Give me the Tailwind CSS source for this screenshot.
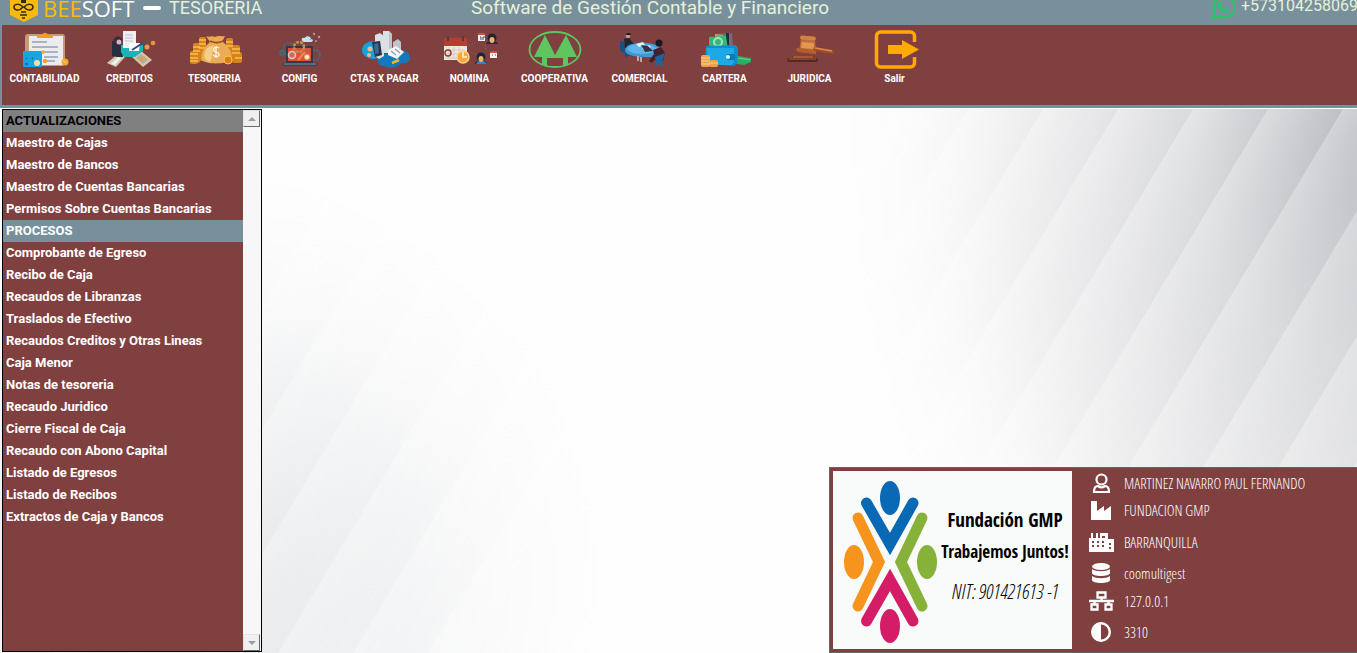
<!DOCTYPE html>
<html lang="es">
<head>
<meta charset="utf-8">
<meta name="viewport" content="width=device-width, initial-scale=1">
<title>BEESOFT - Tesoreria</title>
<script src="https://cdn.jsdelivr.net/npm/@tailwindcss/browser@4"></script>
</head>
<body class="flex h-screen flex-col overflow-hidden bg-white font-['Roboto','Liberation_Sans',sans-serif]">

<header class="flex h-[25px] shrink-0 items-start justify-between overflow-hidden bg-[#78909c] pl-2 text-[#e6f2d8]">
  <div class="flex w-[463px] shrink-0 items-start">
    <svg class="h-[23px] w-8" viewBox="0 0 32 23" aria-hidden="true">
      <path d="M2-3 16-9 30-3V15L16 22 2 15Z" fill="#fbb90c"/>
      <g fill="none" stroke="#33290d" stroke-width="1.500"><path d="M15 7C11 3 6 4 6 7s5 5 9 0Zm1 0c4-4 9-3 9 0s-5 5-9 0Z"/><path d="M13 12h5M12 15h7M14 18h3"/></g>
      <path d="M13-1h5v4h-5z" fill="#33290d"/>
    </svg>
    <p class="ml-[3px] w-[93px] font-['Open_Sans',sans-serif] text-[22px] leading-4 text-white"><span class="text-[#fbb90c]">BEE</span>SOFT</p>
    <span class="mt-1.5 ml-[7px] h-1 w-[18px] rounded-full bg-white"></span>
    <h1 class="ml-2 text-lg leading-4">TESORERIA</h1>
  </div>
  <p class="flex-1 text-[19px] leading-4 whitespace-nowrap">Software de Gestión Contable y Financiero</p>
  <a href="https://wa.me/573104258069" class="flex w-[146px] shrink-0 items-start gap-1.5 overflow-hidden text-base leading-3 whitespace-nowrap">
    <svg class="h-5 w-6 shrink-0" viewBox="0 0 24 20" aria-hidden="true"><path d="M2 18 4 12A10.500 10.500 0 1 1 9 16.500Z" fill="none" stroke="#25c765" stroke-width="2.200"/><path d="M8 1c2-1 3 3 2 5 1 2 2 3 4 3 1-1 4-1 3 2-2 3-6 1-8-1S5 4 8 1Z" fill="#25c765"/></svg>
    +573104258069
  </a>
</header>

<nav aria-label="Módulos" class="mb-px flex h-[83px] shrink-0 border-b-[3px] border-l-2 border-[#78909c] bg-[#804040] text-[10px] leading-3 font-bold text-white">
  <button class="flex w-[85px] flex-col items-center gap-[3px] pt-[5px]">
    <svg class="h-10 w-14" viewBox="0 0 56 40" aria-hidden="true"><rect x="8" y="4" width="40" height="32" rx="3" fill="#c79a72"/><path d="M12 6h34v29H12z" fill="#ececee"/><path d="M20 8V5h5c1-3 5-3 6 0h5v3Z" fill="#f59a23"/><path d="M15 12h15M15 17h26M19 22h22M27 27h14M27 31h11" stroke="#92a0b9" stroke-width="1.500"/><rect x="6" y="21" width="19" height="16" rx="1" fill="#17a4df"/><path d="m9 28 1 1m5-1 1 1m-8 5h3" stroke="#116493" stroke-width="1.500"/><circle cx="20" cy="33" r="3" fill="#ffe2a0"/><g fill="#f5a623"><circle cx="26" cy="22" r="1.800"/><circle cx="28" cy="31" r="2.200"/><circle cx="48" cy="32" r="3.500"/></g><path d="m46 31 4 2" stroke="#ffd66e"/></svg>
    CONTABILIDAD
  </button>
  <button class="flex w-[85px] flex-col items-center gap-[3px] pt-[5px]">
    <svg class="h-10 w-14" viewBox="0 0 56 40" aria-hidden="true"><path d="m5 33 12-10 6 4-9 10Z" fill="#cfccbd"/><path d="m9 34 7-7 3 1-6 7Z" fill="#f6f4df"/><path d="m30 27 9-6 11 9-9 7Z" fill="#d9c5a2"/><path d="m34 28 5-4 7 6-5 4Z" fill="#a9b0a8"/><path d="m37 29 5-3 2 2-5 3Z" fill="#ee9b41"/><path d="M10 11h8l3 16h-6l-5-1Z" fill="#27303e"/><circle cx="16" cy="11" r="4.500" fill="#3b2a3b"/><circle cx="17" cy="12" r="2.500" fill="#d7b5bd"/><path d="M19 15h22v6l-8 6H22l-3-5Z" fill="#1bb2b8"/><path d="M21 1h13v17H21z" fill="#f0f0f2"/><path d="M23 5h8m-8 3h8m-8 3h8" stroke="#bac5cc"/><path d="M27 13h11l-1 8H27Z" fill="#f7f9fb"/><path d="M30 20 47 9" stroke="#185a83" stroke-width="2"/><path d="m40 11 8-3 1 4-7 4Z" fill="#70493f"/><circle cx="45" cy="17" r="2.500" fill="#e79a4c"/><circle cx="51" cy="13" r="2.300" fill="#e9913f"/></svg>
    CREDITOS
  </button>
  <button class="flex w-[85px] flex-col items-center gap-[3px] pt-[5px]">
    <svg class="h-10 w-14" viewBox="0 0 56 40" aria-hidden="true"><g fill="#d7821a"><rect x="3" y="21" width="8" height="13" rx="2"/><rect x="6" y="13" width="7" height="20" rx="2"/><rect x="12" y="7" width="7" height="24" rx="2"/><rect x="39" y="8" width="7" height="24" rx="2"/><rect x="45" y="15" width="8" height="18" rx="2"/><rect x="48" y="22" width="7" height="11" rx="2"/></g><path d="M3 24h8m-8 4h8m-8 3h8M6 17h7m-7 4h7m-1-11h7m-7 4h7m-7 4h7m20-6h7m-7 4h7m-1 3h8m-8 4h8m-5 5h7" stroke="#f8c153" stroke-width="1.300"/><path d="M23 12h13c7 6 10 12 8 18-2 4-26 5-29 0-2-6 2-13 8-18Z" fill="#eaac54"/><path d="m23 12-4-6c4 2 5-1 9 1 4-2 6 0 10-1l-3 6Z" fill="#ecaa50"/><path d="M23 11c4 2 9 2 13 0" fill="none" stroke="#9b4e1e" stroke-width="1.500"/><path d="M20 18c-5 8-3 12 3 14 4-8 1-12 4-17Z" fill="#f5cf89"/><path d="M32 18c-3-2-7 0-5 3 1 1 4 1 5 3s-3 4-6 1m3-9v12" fill="none" stroke="#fff8e6" stroke-width="1.300"/><circle cx="41" cy="30" r="4" fill="#d68119" stroke="#ffc44c"/></svg>
    TESORERIA
  </button>
  <button class="flex w-[85px] flex-col items-center gap-[3px] pt-[5px]">
    <svg class="h-10 w-14" viewBox="0 0 56 40" aria-hidden="true"><g fill="none" stroke="#426978" stroke-width="2"><circle cx="17" cy="19" r="6" stroke-dasharray="3 1"/><circle cx="43" cy="25" r="5" stroke-dasharray="3 1"/><circle cx="10" cy="23" r="2"/></g><path d="M14 16h27v17H14z" fill="#303a4a"/><path d="M16 18h23v13H16z" fill="#dc5238"/><circle cx="27" cy="17" r="5" fill="none" stroke="#b9954f" stroke-width="2.500" stroke-dasharray="3 1"/><circle cx="20" cy="25" r="3.500" fill="#da6551" stroke="#d7cfcb" stroke-width="1.500"/><circle cx="35" cy="27" r="2.500" fill="#fff0dc" stroke="#f5a456"/><path d="m26 30 7-8" stroke="#ef874f" stroke-width="2"/><path d="M10 33h36l-2 3H12Z" fill="#374756"/><path d="M12 34h32" stroke="#7890a4"/><path d="M30 11c-1-3 1-4 3-3 1-3 6-2 6 1 3 0 2 3 0 3h-7Z" fill="#c3e4fa"/><g fill="#b0a0b0"><circle cx="42" cy="4" r="1.200"/><circle cx="47" cy="7" r="1.200"/><circle cx="44" cy="11" r="1"/></g><path d="m38 10 4-6m-1 12 6-9" stroke="#806b77" stroke-dasharray="1 2"/></svg>
    CONFIG
  </button>
  <button class="flex w-[85px] flex-col items-center gap-[3px] pt-[5px]">
    <svg class="h-10 w-14" viewBox="0 0 56 40" aria-hidden="true"><ellipse cx="16" cy="20" rx="11" ry="9" fill="#17a0dd"/><path d="M21 28c4-6 9-2 14-6 6-4 19-1 17 4 3 3-1 8-7 7-4 5-14 6-18 3-5 0-8-4-6-8Z" fill="#1478bd"/><path d="m18 5 5-2 4 3v20l-5 3-4-3Zm8-4h6l3 3v19h-9Z" fill="#dcdfe4"/><path d="m32 2 3 2v18l-3 2Zm4 10 5-3 3 3v8l-8 3Z" fill="#bec4cc"/><path d="m15 12 8-1 2 14-7 2Z" fill="#273449"/><path d="m17 14 4-1 1 10-4 1Z" fill="#426991"/><path d="m31 20 8-4 8 6-7 7-9-4Z" fill="#f4f7f9"/><path d="m34 21 5 4m-1-6 5 4" stroke="#8fa0b1" stroke-width="1.500"/><g fill="#f4bb83"><circle cx="13" cy="19" r="2.500"/><circle cx="12" cy="25" r="2"/></g><path d="m35 33 7-3" stroke="#f6b42e" stroke-width="2.500"/></svg>
    CTAS X PAGAR
  </button>
  <button class="flex w-[85px] flex-col items-center gap-[3px] pt-[5px]">
    <svg class="h-10 w-14" viewBox="0 0 56 40" aria-hidden="true"><path d="M2 13h23v17H2z" fill="#f0e8dd"/><path d="M2 8h23v8H2z" fill="#b83c30"/><path d="M6 6v5m15-5v5" stroke="#5b3836" stroke-width="2"/><path d="M3 20h20M3 24h20M3 28h20M7 17v12m5-12v12m5-12v12" stroke="#d3ccc6"/><circle cx="6" cy="23" r="3" fill="none" stroke="#943d35" stroke-width="1.500"/><circle cx="21" cy="27" r="6" fill="#f6a83c" stroke="#ffd185" stroke-width="1.500"/><path d="M21 22v5h4" fill="none" stroke="#fff4d8" stroke-width="1.500"/><path d="M36 4h7v7h-7zM48 22h7v6h-7z" fill="#f5efef"/><path d="M36 3h7v2h-7zM48 21h7v2h-7z" fill="#d74849"/><path d="M38 7h1v3m4-3h-2v3m9 15h1m2 0h1" fill="none" stroke="#514c55"/><path d="M44 14c0-4 12-4 12 0ZM33 34c0-5 12-5 12 0Z" fill="#242d43"/><path d="m34 34 3-4h4l4 4Z" fill="#2f87cd"/><circle cx="50" cy="8" r="4.500" fill="#20242c"/><circle cx="39" cy="27" r="4.500" fill="#20242c"/><ellipse cx="50" cy="10" rx="2.500" ry="3" fill="#f1b26b"/><ellipse cx="39" cy="29" rx="2.500" ry="3" fill="#f1b26b"/><path d="m27 16 7-4m-5 10 6 3m8-10 1 6" stroke="#7e727d" stroke-dasharray="1 2"/></svg>
    NOMINA
  </button>
  <button class="flex w-[85px] flex-col items-center gap-[3px] pt-[5px]">
    <svg class="h-10 w-14" viewBox="0 0 56 40" aria-hidden="true"><ellipse cx="28" cy="19.500" rx="25.500" ry="17.500" fill="none" stroke="#5fc65f" stroke-width="1.800"/><g fill="#5fc65f"><path d="M18 5 29 27H20v9l-5-2v-7H7ZM39 5l11 22h-9v7l-5 2v-9h-9Z"/><path d="M18 27h20v1H18z"/></g></svg>
    COOPERATIVA
  </button>
  <button class="flex w-[85px] flex-col items-center gap-[3px] pt-[5px]">
    <svg class="h-10 w-14" viewBox="0 0 56 40" aria-hidden="true"><path d="m8 11 4 1 2 9 7 2v4l-4-2-4 3v-5l-5-2Z" fill="#17517e"/><path d="m12 9 5-2 3 5 6 3-1 4-12-1Z" fill="#202734"/><circle cx="16" cy="6" r="2.300" fill="#c5998a"/><path d="M14 5c0-2 4-3 5 0Z" fill="#17191d"/><path d="M13 20c0-7 17-9 28-6 13 4 9 13-4 13-12 0-24-1-24-7Z" fill="#4099d7"/><path d="M15 19c2-6 22-7 31 0-1 5-26 8-31 0Z" fill="#60b4e9"/><path d="M26 26v5m3-4v5" stroke="#c6ccd2" stroke-width="1.500"/><path d="m24 14 7-2 2 3-6 2Zm6 4 7-3 2 2-6 4Z" fill="#e9eff5"/><path d="m29 15 7 1 5 5-8 1Z" fill="#353542"/><circle cx="47" cy="13" r="3.500" fill="#17191e"/><path d="m41 20 8-3 4 6-2 8-7-2-5 4-2-2 5-7Z" fill="#471f2a"/><path d="m43 27 10-4-3 9 1 5-4-3-4 2 1-5Z" fill="#1c65a2"/></svg>
    COMERCIAL
  </button>
  <button class="flex w-[85px] flex-col items-center gap-[3px] pt-[5px]">
    <svg class="h-10 w-14" viewBox="0 0 56 40" aria-hidden="true"><path d="m18 4 17-1 1 14H19Z" fill="#6c7179"/><path d="M29 3h3v14h-3z" fill="#262c36"/><path d="m18 4 8 1v12h-8Z" fill="#bf9a5c"/><circle cx="36" cy="19" r="4" fill="#ed9b43"/><path d="m12 7 17-1 2 13H12Z" fill="#32b978"/><circle cx="21" cy="12" r="4" fill="none" stroke="#a6e1c0" stroke-width="2"/><path d="m9 16 29-1 3 3v15l-4 3-24-2-5-5Z" fill="#118dcb"/><path d="M9 18h28v14l-3 3H13Z" fill="#1ca9e6"/><path d="M30 24h8v6h-8Z" fill="#087bb9"/><circle cx="31" cy="27" r="2" fill="#e5f8ff"/><g fill="#efa24b"><rect x="4" y="25" width="9" height="12" rx="2"/><rect x="12" y="30" width="9" height="7" rx="2"/></g><path d="M4 28h9m-9 3h9m-9 3h9m-1-1h9" stroke="#ffd288"/><path d="m41 26 13 2v4l-7 3-7-1Z" fill="#28ad64"/><path d="m41 28 12 2" stroke="#71d294"/></svg>
    CARTERA
  </button>
  <button class="flex w-[85px] flex-col items-center gap-[3px] pt-[5px]">
    <svg class="h-10 w-14" viewBox="0 0 56 40" aria-hidden="true"><path d="m19 8 14 1 1 15-17-2Z" fill="#bd6d39"/><path d="m20 12 12 1v6l-13-1Z" fill="#e69653"/><path d="M32 17 51 20c3 1 2 4-1 4l-19-3Z" fill="#9c4c27"/><path d="m33 18 17 3" stroke="#df8b4b" stroke-width="1.500"/><rect x="18" y="6" width="16" height="4" rx="2" fill="#d28149" transform="rotate(5 26 8)"/><rect x="14" y="19" width="20" height="4" rx="2" fill="#b35d2e" transform="rotate(8 24 21)"/><path d="M10 26h22v4H10z" fill="#7c3521"/><path d="M11 27h20" stroke="#d37b49"/><rect x="5" y="28" width="31" height="4" rx="2" fill="#572820"/><path d="M7 29h27" stroke="#a76046"/></svg>
    JURIDICA
  </button>
  <button class="flex w-[85px] flex-col items-center gap-[3px] pt-[5px]">
    <svg class="h-10 w-14" viewBox="0 0 56 40" aria-hidden="true"><path d="M47.500 12V6a4 4 0 0 0-4-4H13.500a4 4 0 0 0-4 4v27a4 4 0 0 0 4 4h30a4 4 0 0 0 4-4v-6" fill="none" stroke="#ffaa00" stroke-width="3.500"/><path d="M21 15h14v-5l17 9.500L35 29v-5H21Z" fill="#ffaa00"/></svg>
    Salir
  </button>
</nav>

<main class="relative flex min-h-0 flex-1 items-stretch justify-between">
  <!-- Decorative feathered backdrop -->
  <svg class="absolute inset-0 h-full w-full" viewBox="0 0 1357 544" preserveAspectRatio="none" aria-hidden="true">
    <defs>
      <radialGradient id="tr" gradientUnits="userSpaceOnUse" cx="1357" cy="20" r="540" gradientTransform="translate(0 -8) scale(1 1.400)"><stop offset="0" stop-color="#bcbdc2"/><stop offset=".3" stop-color="#d9dadc"/><stop offset=".65" stop-color="#f0f0f1"/><stop offset="1" stop-color="#fefefe" stop-opacity="0"/></radialGradient>
      <radialGradient id="bl" gradientUnits="userSpaceOnUse" cx="180" cy="470" r="460"><stop offset="0" stop-color="#e4e5e7"/><stop offset=".5" stop-color="#f2f3f4"/><stop offset="1" stop-color="#fefefe" stop-opacity="0"/></radialGradient>
      <linearGradient id="f" gradientUnits="userSpaceOnUse" x1="0" y1="0" x2="55" y2="33"><stop offset="0" stop-color="#fff" stop-opacity=".3"/><stop offset=".6" stop-color="#fff" stop-opacity=".1"/><stop offset="1" stop-color="#fff" stop-opacity="0"/></linearGradient>
      <path id="b" d="M0 0-326 544H-251L75 0Z" fill="url(#f)"/>
    </defs>
    <path d="M0 0h1357v544H0z" fill="#fefefe"/>
    <path d="M0 0h1357v544H0z" fill="url(#bl)"/>
    <path d="M0 0h1357v544H0z" fill="url(#tr)"/>
    <use href="#b" x="304"/><use href="#b" x="379"/><use href="#b" x="454"/><use href="#b" x="529"/><use href="#b" x="604"/><use href="#b" x="679"/><use href="#b" x="754"/>
    <use href="#b" x="893"/><use href="#b" x="968"/><use href="#b" x="1043"/><use href="#b" x="1118"/><use href="#b" x="1193"/><use href="#b" x="1268"/><use href="#b" x="1343"/><use href="#b" x="1418"/><use href="#b" x="1493"/><use href="#b" x="1568"/>
  </svg>

  <aside class="relative mb-px ml-0.5 flex w-[260px] border border-black bg-[#804040] text-[13px] leading-[22px] font-bold text-white">
    <div class="flex-1 whitespace-nowrap">
      <h2 class="bg-[#808080] pl-[3px] text-black">ACTUALIZACIONES</h2>
      <ul class="pl-[3px]">
        <li><a href="#">Maestro de Cajas</a></li>
        <li><a href="#">Maestro de Bancos</a></li>
        <li><a href="#">Maestro de Cuentas Bancarias</a></li>
        <li><a href="#">Permisos Sobre Cuentas Bancarias</a></li>
      </ul>
      <h2 class="bg-[#78909c] pl-[3px]">PROCESOS</h2>
      <ul class="pl-[3px]">
        <li><a href="#">Comprobante de Egreso</a></li>
        <li><a href="#">Recibo de Caja</a></li>
        <li><a href="#">Recaudos de Libranzas</a></li>
        <li><a href="#">Traslados de Efectivo</a></li>
        <li><a href="#">Recaudos Creditos y Otras Lineas</a></li>
        <li><a href="#">Caja Menor</a></li>
        <li><a href="#">Notas de tesoreria</a></li>
        <li><a href="#">Recaudo Juridico</a></li>
        <li><a href="#">Cierre Fiscal de Caja</a></li>
        <li><a href="#">Recaudo con Abono Capital</a></li>
        <li><a href="#">Listado de Egresos</a></li>
        <li><a href="#">Listado de Recibos</a></li>
        <li><a href="#">Extractos de Caja y Bancos</a></li>
      </ul>
    </div>
    <div class="flex w-[18px] flex-col justify-between bg-[#f7f7f7] pr-px">
      <button aria-label="Subir" class="flex h-[17px] items-center justify-center border border-t-[#e3e3e3] border-r-[#696969] border-b-[#696969] border-l-[#e3e3e3] bg-[#f0f0f0]"><svg class="h-1 w-2" viewBox="0 0 8 4"><path d="M0 4 4 0l4 4Z" fill="#9a9da3"/></svg></button>
      <button aria-label="Bajar" class="flex h-[17px] items-center justify-center border border-t-[#e3e3e3] border-r-[#696969] border-b-[#696969] border-l-[#e3e3e3] bg-[#f0f0f0]"><svg class="h-1 w-2" viewBox="0 0 8 4"><path d="m0 0 4 4 4-4Z" fill="#9a9da3"/></svg></button>
    </div>
  </aside>

  <section aria-label="Sesión" class="relative flex w-[528px] self-end border border-r-0 border-[#666] bg-[#804040] p-[3px]">
    <div class="flex w-[239px] shrink-0 items-center bg-[#f9fafa] pt-1">
      <svg class="ml-[9px] h-[164px] w-24 shrink-0" viewBox="0 0 96 164" role="img" aria-label="Fundación GMP">
        <g fill="none" stroke-width="11" stroke-linecap="round" stroke-linejoin="miter">
          <path d="M24.500 23 48 64 71 23" stroke="#0969b5"/>
          <path d="M24.500 141 48 100 71 141" stroke="#d41d66"/>
          <path d="M16 38 37 82 16 126" stroke="#f7941e"/>
          <path d="M80 38 59 82 80 126" stroke="#86b239"/>
        </g>
        <ellipse cx="48" cy="18" rx="10" ry="17" fill="#0969b5"/>
        <ellipse cx="48" cy="146" rx="10" ry="17" fill="#d41d66"/>
        <ellipse cx="12" cy="82" rx="10" ry="17" fill="#f7941e"/>
        <ellipse cx="85" cy="82" rx="10" ry="17" fill="#86b239"/>
      </svg>
      <div class="flex flex-1 flex-col items-center pb-3 font-['Open_Sans_Condensed','Roboto',sans-serif] text-[17px] leading-8 font-bold whitespace-nowrap text-black">
        <p class="text-[19px] leading-8">Fundación GMP</p>
        <p>Trabajemos Juntos!</p>
        <p class="pt-2 font-['Open_Sans_Condensed_Light','Open_Sans_Condensed',sans-serif] text-[20px] leading-8 font-light italic">NIT: 901421613 -1</p>
      </div>
    </div>
    <dl class="flex flex-1 flex-col pl-[17px] font-['Open_Sans_Condensed_Light','Open_Sans_Condensed',sans-serif] text-[15px] leading-5 font-light text-white">
      <div class="flex h-6 items-center gap-2"><dt class="w-[27px]"><svg class="h-5 w-[25px]" viewBox="0 0 25 20" role="img" aria-label="Usuario"><g fill="none" stroke="#fff" stroke-width="2.200"><circle cx="12.500" cy="6.500" r="5"/><path d="M5 19c0-4 1-6 4-6 2 1.500 5 1.500 7 0 3 0 4 2 4 6Z"/></g></svg></dt><dd>MARTINEZ NAVARRO PAUL FERNANDO</dd></div>
      <div class="flex h-[30px] items-center gap-2"><dt class="w-[27px]"><svg class="h-5 w-[25px]" viewBox="0 0 25 20" role="img" aria-label="Empresa"><path d="M2 1h6v10l7-5v5l7-5v14H2Z" fill="#fff"/></svg></dt><dd>FUNDACION GMP</dd></div>
      <div class="flex h-[34px] items-center gap-2"><dt class="w-[27px]"><svg class="h-5 w-[25px]" viewBox="0 0 25 20" role="img" aria-label="Ciudad"><path d="M0 6h2V1h2v5h3V1h2v5h2V1h8v6h6v13H0Z" fill="#fff"/><path d="M3 9h2v2H3zm5 0h2v2H8zm5 0h2v2h-2zM3 13h2v2H3zm5 0h2v2H8zm5 0h2v2h-2zm7-2h2v2h-2zm0 4h2v2h-2zM13 4h3v2h-3z" fill="#804040"/></svg></dt><dd>BARRANQUILLA</dd></div>
      <div class="flex h-7 items-center gap-2"><dt class="w-[27px]"><svg class="h-5 w-[25px]" viewBox="0 0 25 20" role="img" aria-label="Base de datos"><g fill="#fff"><ellipse cx="12" cy="3.500" rx="9" ry="3.500"/><path d="M3 6c4 3 14 3 18 0v4c0 4-18 4-18 0Zm0 7c4 3 14 3 18 0v4c0 4-18 4-18 0Z"/></g></svg></dt><dd>coomultigest</dd></div>
      <div class="flex h-7 items-center gap-2"><dt class="w-[27px]"><svg class="h-5 w-[25px]" viewBox="0 0 25 20" role="img" aria-label="Servidor"><path d="M8.500 1.500h8v5h-8Zm-6 12h6v5h-6Zm14 0h6v5h-6ZM12.500 7v3M0 10h25M5.500 10v3m14-3v3" fill="none" stroke="#fff" stroke-width="2.300"/></svg></dt><dd>127.0.0.1</dd></div>
      <div class="flex h-[34px] items-center gap-2"><dt class="w-[27px]"><svg class="h-5 w-[25px]" viewBox="0 0 25 20" role="img" aria-label="Puerto"><circle cx="12" cy="10" r="8.800" fill="none" stroke="#fff" stroke-width="2.400"/><path d="M12 2v16a8 8 0 0 1 0-16Z" fill="#fff"/></svg></dt><dd>3310</dd></div>
    </dl>
  </section>
</main>
</body>
</html>
